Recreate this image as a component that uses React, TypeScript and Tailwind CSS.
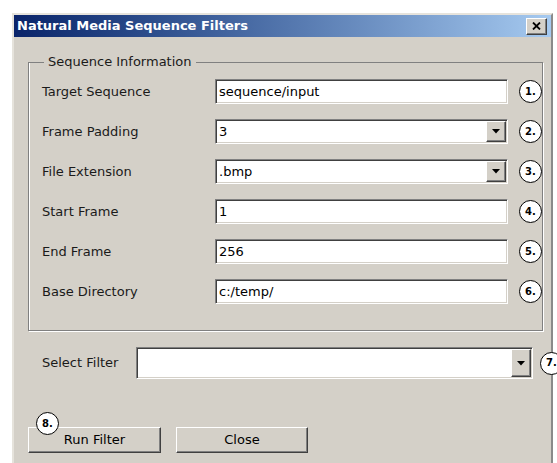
import React from "react";

const face = "font-['DejaVu_Sans',Verdana,sans-serif]";

function Badge({ n }: { n: number }) {
  return (
    <div className="flex h-[23px] w-[23px] shrink-0 items-center justify-center rounded-full border-[1.5px] border-black bg-white text-[10px] font-bold leading-none text-black">
      {n}.
    </div>
  );
}

function DropArrow() {
  return (
    <div className="flex h-full w-[20px] shrink-0 items-center justify-center border border-t-white border-l-white border-b-[#404040] border-r-[#404040] bg-[#d4d0c8] shadow-[inset_-1px_-1px_0_#808080]">
      <svg width="8" height="5" viewBox="0 0 8 5">
        <path d="M0 0h8L4 4.5z" fill="#000" />
      </svg>
    </div>
  );
}

function TextBox({ value, drop, className }: { value: string; drop?: boolean; className: string }) {
  return (
    <div
      className={`flex items-stretch border border-t-[#808080] border-l-[#808080] border-b-white border-r-white bg-white p-[1px] shadow-[inset_1px_1px_0_#404040,inset_-1px_-1px_0_#d4d0c8] ${className}`}
    >
      <div className="flex flex-1 items-center pl-[2px] text-[13px] text-black">{value}</div>
      {drop && <DropArrow />}
    </div>
  );
}

function Row({ label, value, n, drop }: { label: string; value: string; n: number; drop?: boolean }) {
  return (
    <div className="flex h-[25px] items-center">
      <div className="w-[173px] shrink-0 text-[13px] text-[#1a1a1a]">{label}</div>
      <TextBox value={value} drop={drop} className="h-[25px] w-[293px] shrink-0" />
      <div className="ml-[11px]">
        <Badge n={n} />
      </div>
    </div>
  );
}

function Button({ label, className }: { label: string; className?: string }) {
  return (
    <div
      className={`relative flex h-[26px] items-center justify-center border border-t-white border-l-white border-b-[#404040] border-r-[#404040] bg-[#d4d0c8] text-[13px] text-black shadow-[inset_-1px_-1px_0_#808080] ${className ?? ""}`}
    >
      {label}
    </div>
  );
}

export default function App() {
  const rows = [
    { label: "Target Sequence", value: "sequence/input" },
    { label: "Frame Padding", value: "3", drop: true },
    { label: "File Extension", value: ".bmp", drop: true },
    { label: "Start Frame", value: "1" },
    { label: "End Frame", value: "256" },
    { label: "Base Directory", value: "c:/temp/" },
  ];

  return (
    <div className={`h-[463px] w-[557px] overflow-hidden bg-white pl-[12px] pt-[13px] ${face}`}>
      <div className="h-[460px] w-[541px] border-l-2 border-r-2 border-t-2 border-l-[#e6e3dc] border-r-[#8a8a8a] border-t-[#e6e3dc] bg-[#d4d0c8]">
        {/* caption bar */}
        <div className="flex h-[22px] items-center justify-between bg-gradient-to-r from-[#0a246a] to-[#a6caf0] pl-[3px] pr-[4px]">
          <span className="text-[13px] font-bold text-white">Natural Media Sequence Filters</span>
          <div className="flex h-[17px] w-[21px] items-center justify-center border border-t-white border-l-white border-b-[#404040] border-r-[#404040] bg-[#d4d0c8] shadow-[inset_-1px_-1px_0_#808080]">
            <svg width="9" height="8" viewBox="0 0 9 8">
              <path d="M1 0.5L8 7.5M8 0.5L1 7.5" stroke="#000" strokeWidth="1.8" />
            </svg>
          </div>
        </div>

        <div className="pl-[14px] pr-[16px] pt-[17px]">
          <fieldset className="border border-[#808080] pb-[26px] pl-[13px] shadow-[inset_1px_0_0_#fff,1px_1px_0_#fff]">
            <legend className="ml-[2px] px-[4px] text-[13px] leading-[16px] text-[#1a1a1a]">Sequence Information</legend>
            <div className="mt-[9px] flex flex-col gap-[15px]">
              {rows.map((r, i) => (
                <Row key={r.label} label={r.label} value={r.value} drop={r.drop} n={i + 1} />
              ))}
            </div>
          </fieldset>

          <div className="mt-[16px] flex h-[32px] items-center">
            <div className="w-[108px] shrink-0 pl-[14px] text-[13px] text-[#1a1a1a]">Select Filter</div>
            <TextBox value="" drop className="h-[32px] w-[397px] shrink-0" />
            <div className="ml-[7px]">
              <Badge n={7} />
            </div>
          </div>

          <div className="mt-[48px] flex gap-[15px]">
            <Button label="Run Filter" className="w-[133px]" />
            <Button label="Close" className="w-[132px]" />
          </div>
        </div>
      </div>
      <div className="pointer-events-none absolute left-[36px] top-[412px]">
        <Badge n={8} />
      </div>
    </div>
  );
}
